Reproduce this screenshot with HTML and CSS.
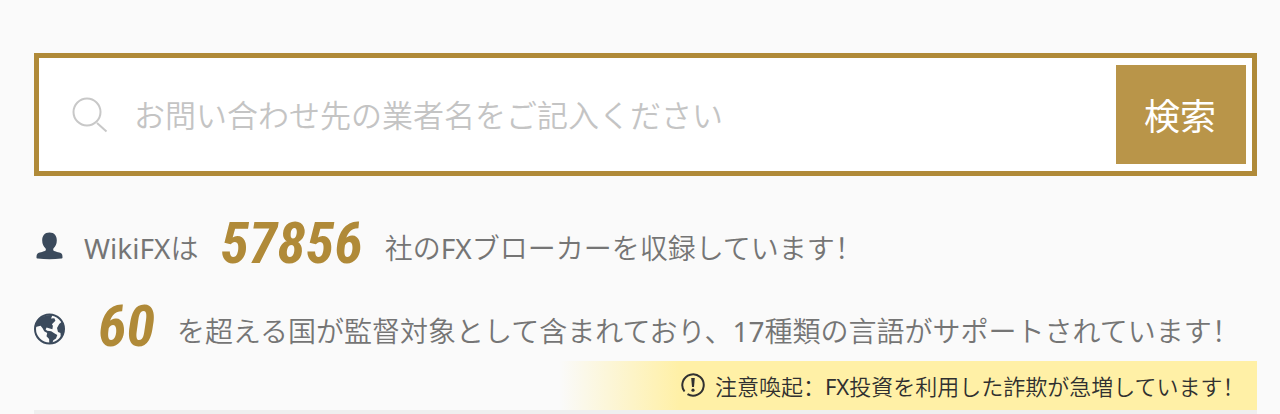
FILE: index.html
```html
<!DOCTYPE html>
<html lang="ja">
<head>
<meta charset="utf-8">
<meta name="viewport" content="width=device-width, initial-scale=1">
<title>WikiFX</title>
<link rel="stylesheet" href="styles.css">
</head>
<body>
<main class="page">
  <form class="search" role="search">
    <label class="search-label" for="broker" aria-label="検索">
      <svg class="search-icon" viewBox="0 0 36 36" aria-hidden="true"><circle cx="15" cy="15" r="13.500"/><path d="M25 26 34.500 34.500"/></svg>
    </label>
    <input class="search-input" id="broker" type="text" placeholder="お問い合わせ先の業者名をご記入ください">
    <button class="search-button" type="submit">検索</button>
  </form>
  <div class="stats">
    <div class="stat">
      <svg class="stat-icon" viewBox="0 0 32 32" aria-hidden="true"><path d="M15.500 2.500c5 0 7.300 3.500 7.300 8 0 3.600-1.400 6-3.200 7.700-.6.700-.5 2 .1 2.600 1 .8 5.400 1.400 7.400 2.500 1.300.8 1.400 2.400 1.400 4.200 0 .7-.5 1-1.200 1.100-7.700.8-15.900.8-23.600 0-.8-.1-1.200-.4-1.200-1.100 0-1.800.2-3.400 1.500-4.200 2-1.100 6.400-1.700 7.300-2.500.7-.6.800-1.900.1-2.600-1.800-1.700-3.200-4.100-3.200-7.700 0-4.500 2.300-8 7.300-8z"/></svg>
      <p class="stat-text"><span><span class="latin">WikiFX</span>は</span><strong class="stat-number">57856</strong><span>社の<span class="latin">FX</span>ブローカーを収録しています！</span></p>
    </div>
    <div class="stat">
      <svg class="stat-icon" viewBox="0 0 32 32" aria-hidden="true"><circle class="globe-ring" cx="15.500" cy="16" r="14.500"/><path d="M18.500 2 17 5.500l3.400-.3 1 2.600-3.500 3.400 1 1.600-.5 3.400-2.600-.6-3.200-1-1 2 1.600 1.200 4 .5 3.500 2.300 2.600 1.500-1.300 3.400-2.700 1.700-1.200 3.600-2.800-.4-.2-4.300-2.600-2.900.7-3.200-3-1.700-1.600-3-2-2.500-5 1.200C1.600 7 9 1.200 18.500 2z"/><path d="m28 8.500-2.800 2.500-2.200 4 1 4 2.500 1 .2 3.400-1.200 2.800c4.400-3.600 6.600-11.400 2.500-17.700z"/></svg>
      <p class="stat-text stat-text--indented"><strong class="stat-number">60</strong><span>を超える国が監督対象として含まれており、<span class="latin">17</span>種類の言語がサポートされています！</span></p>
    </div>
  </div>
  <p class="notice">
    <svg class="notice-icon" viewBox="0 0 24 24" aria-hidden="true"><path class="notice-ring" d="M3.500 18.500A10.700 10.700 0 1 1 6.500 21.200"/><path d="M10.200 5h3.600l-.8 9h-2z"/><circle cx="12" cy="17.200" r="1.600"/></svg>
    <span>注意喚起：<span class="latin">FX</span>投資を利用した詐欺が急増しています！</span>
  </p>
  <div class="panel"></div>
</main>
</body>
</html>
```
FILE: styles.css
```css
* { box-sizing: border-box; }
body {
  margin: 0;
  background: #fafafa;
  color: #757575;
  font-family: "Noto Sans", "Noto Sans CJK SC", sans-serif;
  font-feature-settings: "locl" 0;
  font-weight: 350;
}
.latin { font-weight: 400; }
.page {
  display: flex;
  flex-direction: column;
  padding: 53px 23px 0 34px;
}
.search {
  display: flex;
  align-items: center;
  padding: 7px 6px;
  border: 5px solid #b08a38;
  background: #fff;
}
.search-label { display: flex; padding: 0 26px 0 27px; }
.search-icon {
  width: 36px;
  height: 36px;
  fill: none;
  stroke: #c8c8c8;
  stroke-width: 2;
}
.search-input {
  flex: 1;
  min-width: 0;
  padding: 0;
  border: 0;
  outline: 0;
  background: transparent;
  color: #555;
  font: inherit;
  font-size: 31px;
}
.search-input::placeholder { color: #c4c4c4; opacity: 1; }
.search-button {
  width: 130px;
  height: 99px;
  padding: 0 2px 0 0;
  border: 0;
  background: #b99549;
  color: #fff;
  font: inherit;
  font-size: 36px;
  font-weight: 400;
}
.stats {
  display: flex;
  flex-direction: column;
  gap: 19px;
  padding-top: 38px;
}
.stat {
  display: flex;
  align-items: center;
  height: 64px;
}
.stat-icon { width: 32px; height: 32px; fill: #3b4a5c; }
.globe-ring { fill: none; stroke: #3b4a5c; stroke-width: 2; }
.stat-text {
  display: flex;
  align-items: center;
  gap: 22px;
  margin: 0 0 0 18px;
  padding-top: 4px;
  font-size: 28px;
  line-height: 56px;
  white-space: nowrap;
}
.stat-text--indented { margin-left: 32px; }
.stat-number {
  padding-bottom: 10px;
  color: #b08a38;
  font-family: "Roboto Condensed", Roboto, sans-serif;
  font-size: 58px;
  font-style: italic;
  font-weight: 700;
}
.notice {
  display: flex;
  align-items: center;
  align-self: flex-end;
  gap: 10px;
  width: 57%;
  height: 49px;
  margin: 0;
  padding: 0 0 2px 121px;
  background: linear-gradient(90deg, #fafafa, #fff0a6 120px);
  color: #303030;
  font-size: 22px;
  white-space: nowrap;
}
.notice-icon { width: 24px; height: 24px; fill: #303030; }
.notice-ring { fill: none; stroke: #303030; stroke-width: 2; }
.panel { height: 4px; background: #efefef; }
```
